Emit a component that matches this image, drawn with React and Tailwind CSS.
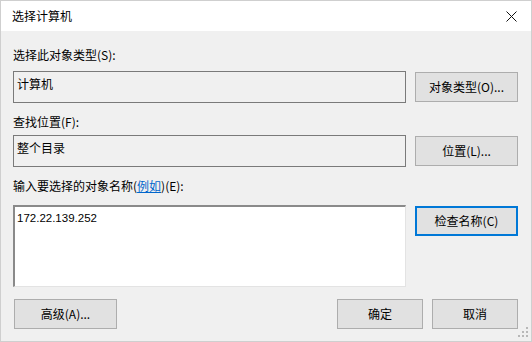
const font = { fontFamily: '"Noto Sans CJK SC", "Noto Sans", sans-serif' };

function Button({ children, className = '', focused = false }) {
  return (
    <div
      className={`flex items-center justify-center bg-[#e1e1e1] text-[12px] text-black ${
        focused ? 'border-2 border-[#0078d7]' : 'border border-[#adadad]'
      } ${className}`}
    >
      {children}
    </div>
  );
}

function Grip() {
  const dots = [
    [8, 0],
    [4, 4],
    [8, 4],
    [0, 8],
    [4, 8],
    [8, 8],
  ];
  return (
    <svg width="11" height="11" className="absolute right-[2px] bottom-[3px]">
      {dots.map(([x, y]) => (
        <rect key={`${x}-${y}`} x={x} y={y} width="2" height="2" fill="#b8b8b8" />
      ))}
    </svg>
  );
}

export default function App() {
  return (
    <div
      style={font}
      className="relative w-[532px] h-[342px] flex flex-col border border-[#cfcfcf] bg-[#f0f0f0] text-[12px] leading-[16px] text-black overflow-hidden"
    >
      <div className="h-[30px] bg-white flex items-center justify-between pl-[11px] pr-[14px] shrink-0">
        <span className="text-[12px]">选择计算机</span>
        <svg width="11" height="11" viewBox="0 0 11 11">
          <path d="M0.5 0.5L10.5 10.5M10.5 0.5L0.5 10.5" stroke="#111" strokeWidth="1" />
        </svg>
      </div>

      <div className="flex flex-col pl-[12px] pr-[13px] pt-[16px]">
        <div className="h-[16px]">选择此对象类型(S):</div>
        <div className="flex items-start gap-[9px] mt-[8px]">
          <div className="w-[393px] h-[32px] border border-[#7a7a7a] px-[3px] pt-[4px]">计算机</div>
          <Button className="w-[103px] h-[30px] mt-px">对象类型(O)...</Button>
        </div>

        <div className="h-[16px] mt-[11px]">查找位置(F):</div>
        <div className="flex items-start gap-[9px] mt-[5px]">
          <div className="w-[393px] h-[32px] border border-[#7a7a7a] px-[3px] pt-[4px]">整个目录</div>
          <Button className="w-[103px] h-[30px] mt-px">位置(L)...</Button>
        </div>

        <div className="h-[16px] mt-[11px]">
          输入要选择的对象名称(
          <span className="text-[#0066cc] underline">例如</span>
          )(E):
        </div>
        <div className="flex items-start gap-[9px] mt-[11px]">
          <div className="w-[393px] h-[82px] bg-white border-t-2 border-l-2 border-t-[#8a8a8a] border-l-[#8a8a8a] border-r border-b border-r-[#e3e3e3] border-b-[#e3e3e3] px-[2px] pt-[3px] font-['Liberation_Sans',sans-serif] text-[11.5px] leading-[16px]">
            172.22.139.252
          </div>
          <Button focused className="w-[103px] h-[30px] mt-px">检查名称(C)</Button>
        </div>

        <div className="flex items-center mt-[12px] pl-px">
          <Button className="w-[103px] h-[30px]">高级(A)...</Button>
          <div className="flex-1" />
          <Button className="w-[86px] h-[30px]">确定</Button>
          <Button className="w-[86px] h-[30px] ml-[9px]">取消</Button>
        </div>
      </div>
      <Grip />
    </div>
  );
}
